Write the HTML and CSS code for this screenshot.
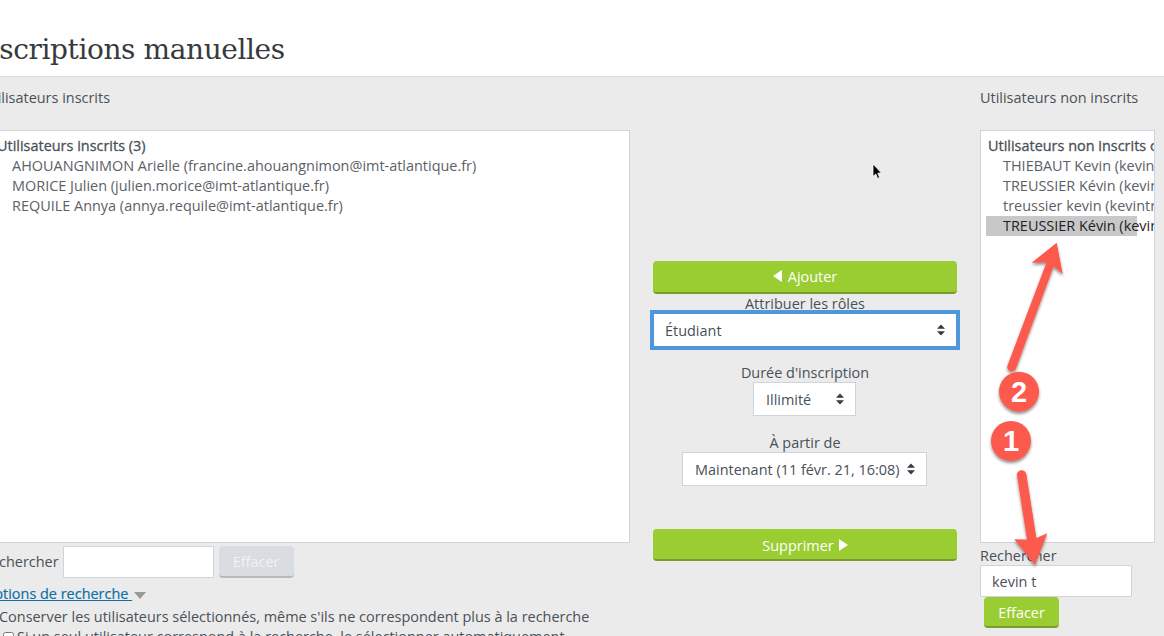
FILE: index.html
```html
<!doctype html>
<html lang="fr">
    <head>
        <meta charset="utf-8" />
        <title>Inscriptions manuelles</title>
        <link rel="stylesheet" href="styles.css">
    </head>
    <body>
        <div class="page">
            <header class="page-header">
                <h1 class="page-header__title">Inscriptions manuelles</h1>
            </header>
            <main class="enrol">
                <section class="enrol__side enrol__side--left">
                    <div class="enrol__label">Utilisateurs inscrits</div>
                    <div class="listbox">
                        <div class="listbox__group">Utilisateurs inscrits (3)</div>
                        <div class="listbox__option">AHOUANGNIMON Arielle (francine.ahouangnimon@imt-atlantique.fr)</div>
                        <div class="listbox__option">MORICE Julien (julien.morice@imt-atlantique.fr)</div>
                        <div class="listbox__option">REQUILE Annya (annya.requile@imt-atlantique.fr)</div>
                    </div>
                    <div class="search search--inline">
                        <label class="search__label">Rechercher</label>
                        <input class="search__input search__input--wide" type="text" value="" />
                        <button class="btn btn--disabled" type="button">Effacer</button>
                    </div>
                    <div class="options">
                        <a class="options__link" href="#">Options de recherche </a>
                        <span class="options__caret"></span>
                    </div>
                    <div class="options__line">Conserver les utilisateurs sélectionnés, même s'ils ne correspondent plus à la recherche</div>
                    <div class="options__line options__line--check">
                        <input class="options__check" type="checkbox" />
                        <span>Si un seul utilisateur correspond à la recherche, le sélectionner automatiquement</span>
                    </div>
                </section>

                <section class="enrol__center">
                    <button class="btn btn--add" type="button"><span class="tri tri--left"></span>Ajouter</button>
                    <div class="field field--role">
                        <div class="field__label">Attribuer les rôles</div>
                        <div class="select select--focus">
                            <span>Étudiant</span>
                            <svg class="select__arrows" width="10" height="12" viewBox="0 0 10 12"><path d="M5 0.5 9 4.8H1zM5 11.5 1 7.2H9z" fill="#343a40"/></svg>
                        </div>
                    </div>
                    <div class="field field--duration">
                        <div class="field__label">Durée d'inscription</div>
                        <div class="select select--small">
                            <span>Illimité</span>
                            <svg class="select__arrows" width="10" height="12" viewBox="0 0 10 12"><path d="M5 0.5 9 4.8H1zM5 11.5 1 7.2H9z" fill="#343a40"/></svg>
                        </div>
                    </div>
                    <div class="field field--start">
                        <div class="field__label">À partir de</div>
                        <div class="select select--date">
                            <span>Maintenant (11 févr. 21, 16:08)</span>
                            <svg class="select__arrows" width="10" height="12" viewBox="0 0 10 12"><path d="M5 0.5 9 4.8H1zM5 11.5 1 7.2H9z" fill="#343a40"/></svg>
                        </div>
                    </div>
                    <button class="btn btn--remove" type="button">Supprimer<span class="tri tri--right"></span></button>
                </section>

                <section class="enrol__side">
                    <div class="enrol__label">Utilisateurs non inscrits</div>
                    <div class="listbox">
                        <div class="listbox__group">Utilisateurs non inscrits correspondants</div>
                        <div class="listbox__option">THIEBAUT Kevin (kevin.thiebaut@imt-atlantique.fr)</div>
                        <div class="listbox__option">TREUSSIER Kévin (kevin.treussier@imt-atlantique.fr)</div>
                        <div class="listbox__option">treussier kevin (kevintreussier@gmail.com)</div>
                        <div class="listbox__option listbox__option--selected">TREUSSIER Kévin (kevin.treussier@gmail.com)</div>
                    </div>
                    <div class="search">
                        <label class="search__label search__label--top">Rechercher</label>
                        <input class="search__input" type="text" value="kevin t" />
                        <button class="btn btn--clear" type="button">Effacer</button>
                    </div>
                </section>
            </main>

            <!-- annotations posees sur la capture -->
            <svg class="marks" width="1164" height="636" viewBox="0 0 1164 636">
                <defs>
                    <filter id="markShadow" x="-30%" y="-30%" width="160%" height="160%">
                        <feDropShadow dx="0" dy="2" stdDeviation="1.5" flood-color="#000" flood-opacity="0.45"/>
                    </filter>
                </defs>
                <g filter="url(#markShadow)" fill="#fb5a4e">
                    <path d="M1007.6 365.2 1046.5 262.5 1031.7 262.7 1056.7 242.7 1062.7 274 1053.6 266.5 1016 368.6A4.5 4.5 0 0 1 1007.6 365.2Z"/>
                    <path d="M1017 475.6A4.7 4.7 0 0 1 1026.4 474.4L1036.4 538 1047.3 533.3 1035 565 1014.3 539.3 1027 539.6Z"/>
                    <circle cx="1019" cy="391.7" r="20"/>
                    <circle cx="1011" cy="441" r="20"/>
                </g>
                <text class="marks__num" x="1019" y="402">2</text>
                <text class="marks__num" x="1011" y="451">1</text>
                <path class="marks__cursor" d="M873 164V176.5L875.8 174 877.6 178.4 879.6 177.5 877.8 173.2 881.4 173Z"/>
            </svg>
        </div>
    </body>
</html>
```

FILE: styles.css
```css
html,
body {
    margin: 0;
    height: 100%;
    overflow: hidden;
}

body {
    font-family: 'Open Sans', sans-serif;
    font-size: 14.44px;
    line-height: 20px;
    color: #495057;
    background: #ebebeb;
}

.page {
    position: relative;
    width: 1164px;
    height: 636px;
    overflow: hidden;
}

.page-header {
    height: 76px;
    background: white;
    border-bottom: 1px solid #dcdcdc;
}

.page-header__title {
    margin: 0 0 0 -29px;
    padding-top: 32px;
    font-family: 'DejaVu Serif', serif;
    font-size: 28px;
    line-height: 36px;
    font-weight: 400;
    letter-spacing: -0.4px;
    color: #373a3c;
    white-space: nowrap;
}

.enrol {
    display: grid;
    grid-template-columns: 641px 304px 175px;
    column-gap: 23px;
    margin-left: -11px;
    padding-top: 11px;
}

.enrol__label {
    height: 20px;
    margin-bottom: 22px;
    white-space: nowrap;
}

.enrol__side,
.enrol__center {
    min-width: 0;
}

.enrol__side--left .enrol__label {
    margin-left: -7px;
}

.listbox {
    box-sizing: border-box;
    height: 413px;
    padding: 5px 7px;
    background: white;
    border: 1px solid #ced4da;
    overflow: hidden;
    white-space: nowrap;
}

.listbox__group {
    -webkit-text-stroke: 0.3px #495057;
}

.listbox__option {
    width: 151px;
    margin-left: -2px;
    padding-left: 17px;
    box-sizing: border-box;
    color: #5b6167;
}

.listbox__option--selected {
    background: #c8c8c8;
    color: #1d2125;
}

.search--inline {
    display: flex;
    align-items: center;
    gap: 5px;
    margin: 3px 0 0 -7px;
}

.search__label {
    margin-right: -1px;
    white-space: nowrap;
}

.search__label--top {
    display: block;
    height: 19px;
    margin: 3px 0 0;
}

.search__input {
    box-sizing: border-box;
    display: block;
    width: 152px;
    height: 32px;
    padding: 0 11px;
    font: inherit;
    color: #495057;
    background: white;
    border: 1px solid #ced4da;
    border-radius: 1px;
}

.search__input--wide {
    width: 151px;
}

.btn {
    box-sizing: border-box;
    height: 32px;
    padding: 1px 0 0;
    font: inherit;
    color: white;
    background: #9acd32;
    border: 0;
    border-bottom: 2px solid #7a9c2c;
    border-radius: 4px;
}

.btn--disabled {
    width: 75px;
    background: #d9dce0;
    border-bottom-color: #b6babf;
    color: #f1f2f3;
}

.btn--clear {
    display: block;
    width: 75px;
    height: 31px;
    margin-left: 4px;
    padding-top: 3px;
}

.btn--add {
    display: block;
    width: 304px;
    height: 33px;
    padding-top: 0;
}

.btn--remove {
    display: block;
    width: 304px;
    margin-top: 43px;
    padding-top: 3px;
}

.tri {
    display: inline-block;
    width: 0;
    height: 0;
    border-top: 6px solid transparent;
    border-bottom: 6px solid transparent;
}

.tri--left {
    margin-right: 6px;
    border-right: 9px solid white;
}

.tri--right {
    margin-left: 5px;
    border-left: 9px solid white;
}

.enrol__center {
    padding-top: 173px;
}

.field {
    display: flex;
    flex-direction: column;
    align-items: center;
}

.field__label {
    height: 19px;
    white-space: nowrap;
}

.field--role .field__label {
    height: 16px;
}

.field--duration {
    margin-top: 13px;
}

.field--start {
    margin-top: 17px;
}

.select {
    box-sizing: border-box;
    display: flex;
    align-items: center;
    justify-content: space-between;
    height: 34px;
    padding: 2px 10px 0 12px;
    background: white;
    border: 1px solid #ced4da;
    white-space: nowrap;
}

.select__arrows {
    margin-top: -2px;
}

.select--focus {
    width: 310px;
    height: 40px;
    padding: 2px 10px 0 11px;
    border: 4px solid #4f97dd;
}

.select--small {
    width: 103px;
    margin-right: 1px;
}

.select--date {
    width: 245px;
    margin-right: 1px;
}

.options {
    margin: 6px 0 0 -6px;
}

.options__link {
    color: #0f6fa5;
    text-decoration: underline;
    -webkit-text-stroke: 0.2px #0f6fa5;
}

.options__caret {
    display: inline-block;
    width: 0;
    height: 0;
    margin-left: 2px;
    vertical-align: 0;
    border-left: 6.5px solid transparent;
    border-right: 6.5px solid transparent;
    border-top: 7px solid #999;
}

.options__line {
    margin-top: 3px;
    padding-left: 10px;
    white-space: nowrap;
}

.options__line--check {
    display: flex;
    align-items: center;
    margin-top: 0;
    padding-left: 14px;
}

.options__check {
    width: 11px;
    height: 11px;
    margin: 0 3px 0 0;
}

.marks {
    position: absolute;
    top: 0;
    left: 0;
}

.marks__num {
    font-family: 'Liberation Sans', sans-serif;
    font-size: 29px;
    font-weight: 700;
    fill: white;
    text-anchor: middle;
}

.marks__cursor {
    fill: black;
    stroke: white;
    stroke-width: 0.8;
}
```
